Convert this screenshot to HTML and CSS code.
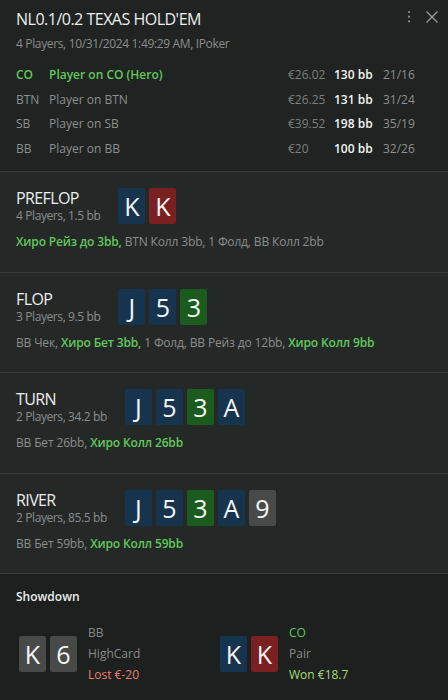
FILE: index.html
```html
<!DOCTYPE html>
<html lang="ru">
<head>
    <meta charset="UTF-8">
    <meta name="viewport" content="width=device-width, initial-scale=1.0">
    <title>Hand</title>
    <link rel="stylesheet" href="styles.css">
</head>
<body>
<div class="hand">
    <header class="hand-head">
        <div class="title-row">
            <h1>NL0.1/0.2 TEXAS HOLD'EM</h1>
            <div class="tools">
                <svg width="6" height="14" viewBox="0 0 6 14"><circle cx="3" cy="2" r="1.1" fill="#8a8f8d"/><circle cx="3" cy="6.7" r="1.1" fill="#8a8f8d"/><circle cx="3" cy="11.3" r="1.1" fill="#8a8f8d"/></svg>
                <svg width="14" height="14" viewBox="0 0 14 14"><path d="M1.5 1.5 L12.5 12.5 M12.5 1.5 L1.5 12.5" stroke="#9a9f9d" stroke-width="1.3" fill="none"/></svg>
            </div>
        </div>
        <div class="sub">4 Players, 10/31/2024 1:49:29 AM, IPoker</div>
        <div class="players">
            <div class="p-row hero"><span class="pos">CO</span><span class="name">Player on CO (Hero)</span><span class="money">€26.02</span><span class="bb">130 bb</span><span class="stat">21/16</span></div>
            <div class="p-row"><span class="pos">BTN</span><span class="name">Player on BTN</span><span class="money">€26.25</span><span class="bb">131 bb</span><span class="stat">31/24</span></div>
            <div class="p-row"><span class="pos">SB</span><span class="name">Player on SB</span><span class="money">€39.52</span><span class="bb">198 bb</span><span class="stat">35/19</span></div>
            <div class="p-row"><span class="pos">BB</span><span class="name">Player on BB</span><span class="money">€20</span><span class="bb">100 bb</span><span class="stat">32/26</span></div>
        </div>
    </header>

    <section class="street">
        <div class="street-top">
            <div class="street-info">
                <div class="street-name">PREFLOP</div>
                <div class="street-sub">4 Players, 1.5 bb</div>
            </div>
            <div class="cards">
                <span class="card blue">K</span><span class="card red">K</span>
            </div>
        </div>
        <div class="actions"><b>Хиро Рейз до 3bb,</b> BTN Колл 3bb, 1 Фолд, BB Колл 2bb</div>
    </section>

    <section class="street">
        <div class="street-top">
            <div class="street-info">
                <div class="street-name">FLOP</div>
                <div class="street-sub">3 Players, 9.5 bb</div>
            </div>
            <div class="cards">
                <span class="card blue">J</span><span class="card blue">5</span><span class="card green">3</span>
            </div>
        </div>
        <div class="actions">BB Чек, <b>Хиро Бет 3bb,</b> 1 Фолд, BB Рейз до 12bb, <b>Хиро Колл 9bb</b></div>
    </section>

    <section class="street">
        <div class="street-top">
            <div class="street-info">
                <div class="street-name">TURN</div>
                <div class="street-sub">2 Players, 34.2 bb</div>
            </div>
            <div class="cards">
                <span class="card blue">J</span><span class="card blue">5</span><span class="card green">3</span><span class="card blue">A</span>
            </div>
        </div>
        <div class="actions">BB Бет 26bb, <b>Хиро Колл 26bb</b></div>
    </section>

    <section class="street">
        <div class="street-top">
            <div class="street-info">
                <div class="street-name">RIVER</div>
                <div class="street-sub">2 Players, 85.5 bb</div>
            </div>
            <div class="cards">
                <span class="card blue">J</span><span class="card blue">5</span><span class="card green">3</span><span class="card blue">A</span><span class="card gray">9</span>
            </div>
        </div>
        <div class="actions">BB Бет 59bb, <b>Хиро Колл 59bb</b></div>
    </section>

    <section class="showdown">
        <div class="sd-title">Showdown</div>
        <div class="sd-grid">
            <div class="sd-player">
                <div class="cards">
                    <span class="card gray">K</span><span class="card gray">6</span>
                </div>
                <div class="sd-info">
                    <div>BB</div>
                    <div>HighCard</div>
                    <div class="lost">Lost €-20</div>
                </div>
            </div>
            <div class="sd-player">
                <div class="cards">
                    <span class="card blue">K</span><span class="card red">K</span>
                </div>
                <div class="sd-info">
                    <div class="hero-pos">CO</div>
                    <div>Pair</div>
                    <div class="won">Won €18.7</div>
                </div>
            </div>
        </div>
    </section>
</div>
</body>
</html>
```

FILE: styles.css
```css
body {
    margin: 0;
    font-family: "Segoe UI", "Open Sans", "Noto Sans", sans-serif;
    background-color: #1c201e;
    color: #8c908e;
    font-size: 12px;
}
.hand-head {
    background-color: #1f2422;
    padding: 9px 16px 10px 16px;
    border-bottom: 1px solid #383d3b;
}
.title-row {
    display: flex;
    justify-content: space-between;
    align-items: flex-start;
}
h1 {
    margin: 0;
    font-size: 16px;
    font-weight: 400;
    line-height: 20px;
    letter-spacing: -0.5px;
    color: #eceeed;
}
.tools {
    display: flex;
    gap: 13px;
    margin-top: 1px;
    margin-right: -7px;
}
.sub {
    margin-top: 7px;
    line-height: 16px;
    letter-spacing: -0.35px;
    color: #8a8e8c;
}
.players {
    margin-top: 11px;
}
.p-row {
    display: grid;
    grid-template-columns: 33px 1fr 46px 49px 49px;
    line-height: 24.5px;
    color: #8c908e;
}
.p-row .money {
    color: #7b7f7d;
}
.p-row .bb {
    color: #f2f4f3;
    font-weight: 600;
}
.hero .pos, .hero .name {
    color: #62c75a;
    font-weight: 600;
}
.street {
    background-color: #242928;
    padding: 16px 16px 21.5px 16px;
    border-bottom: 1px solid #383d3b;
}
.street-top {
    display: flex;
    gap: 18px;
    align-items: flex-start;
}
.street-name {
    font-size: 16px;
    line-height: 20px;
    letter-spacing: -0.6px;
    color: #eceeed;
}
.street-sub {
    line-height: 16px;
    letter-spacing: -0.4px;
    color: #8a8e8c;
}
.cards {
    display: flex;
    gap: 4px;
}
.card {
    width: 27px;
    height: 36px;
    border-radius: 2px;
    display: flex;
    align-items: center;
    justify-content: center;
    font-size: 25px;
    color: #f4f6f5;
}
.blue {
    background-color: #17344f;
}
.red {
    background-color: #7b2020;
}
.green {
    background-color: #1b5c1e;
}
.gray {
    background-color: #484a4a;
}
.actions {
    margin-top: 10px;
    line-height: 16px;
    letter-spacing: -0.15px;
    color: #8a8e8c;
}
.actions b {
    color: #62c75a;
    font-weight: 600;
}
.showdown {
    background-color: #1c201e;
    padding: 15px 16px 20px 16px;
}
.sd-title {
    line-height: 16px;
    color: #eceeed;
    font-weight: 600;
}
.sd-grid {
    display: grid;
    grid-template-columns: 201px 1fr;
    margin-top: 17px;
    padding-left: 3px;
}
.sd-player {
    display: flex;
    align-items: center;
    gap: 11px;
}
.sd-info div {
    line-height: 21px;
    color: #878b89;
}
.sd-info .hero-pos {
    color: #62c75a;
}
.sd-info .lost {
    color: #ef7d6c;
}
.sd-info .won {
    color: #a9dc74;
}
```
